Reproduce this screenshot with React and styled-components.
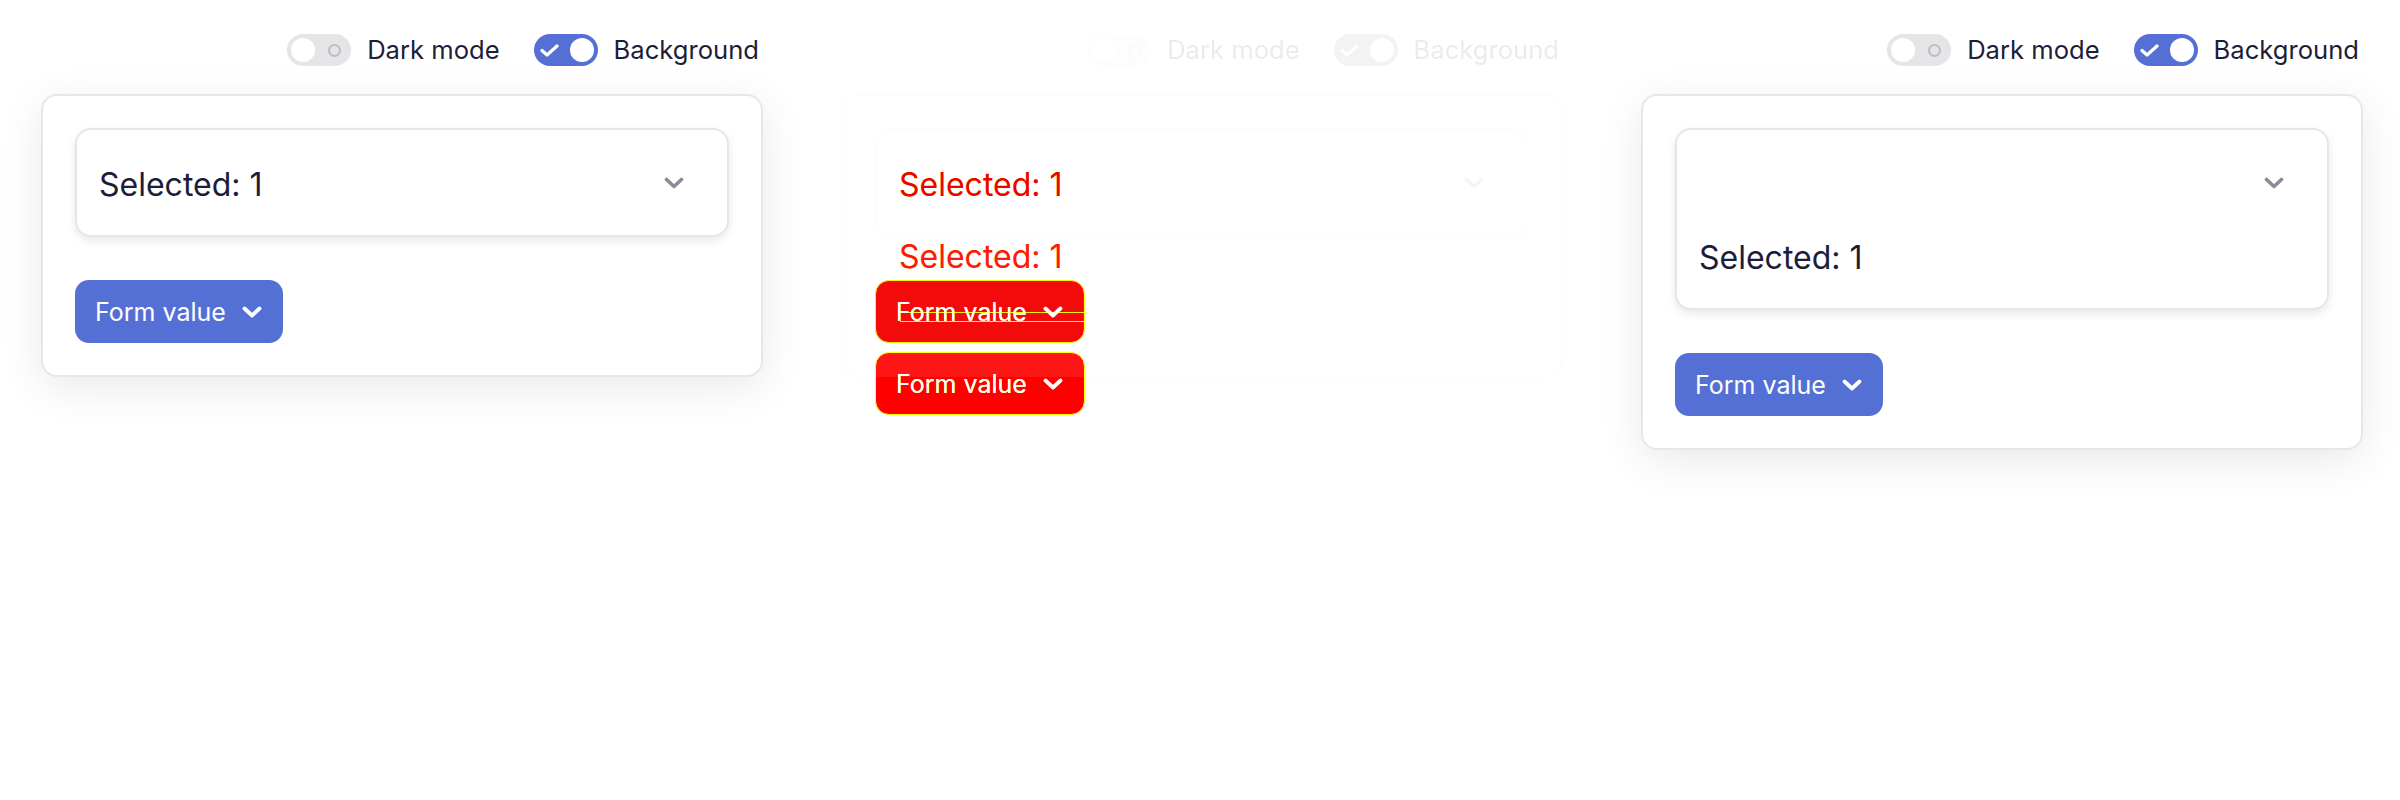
import styled, { createGlobalStyle, css } from "styled-components";

const GlobalStyle = createGlobalStyle`
    body {
        margin: 0;
        background: #ffffff;
        font-family: Inter, "Noto Sans", sans-serif;
        color: #1d1d3b;
    }
`

const Chevron = ({ color, width = 3.6 }) => (
    <svg width="20" height="12" viewBox="0 0 20 12" fill="none">
        <polyline points="2.5,2.5 10,9.5 17.5,2.5" stroke={color} strokeWidth={width} strokeLinecap="round" strokeLinejoin="round" />
    </svg>
);

const Check = () => (
    <svg width="19" height="13" viewBox="0 0 19 13" fill="none">
        <polyline points="2,6.5 7,11 17,2" stroke="#fff" strokeWidth="3.2" strokeLinecap="round" strokeLinejoin="round" />
    </svg>
);

const Toolbar = ({ hidden }) => (
    <Bar $hidden={hidden}>
        <ToggleGroup>
            <Switch>
                <Knob />
                <Ring />
            </Switch>
            <Label>Dark mode</Label>
        </ToggleGroup>
        <ToggleGroup>
            <Switch $on>
                <Check />
                <Knob />
            </Switch>
            <Label>Background</Label>
        </ToggleGroup>
    </Bar>
);

const Panel = ({ wrapped }) => (
    <Column>
        <Toolbar />
        <Card>
            <CardBody>
                <SelectBox $wrapped={wrapped}>
                    {wrapped ? (
                        <>
                            <SelectLine $end>
                                <ChevronBox><Chevron color="#8a8a9b" /></ChevronBox>
                            </SelectLine>
                            <SelectLine>
                                <SelectValue>Selected: 1</SelectValue>
                            </SelectLine>
                        </>
                    ) : (
                        <SelectLine>
                            <SelectValue>Selected: 1</SelectValue>
                            <ChevronBox><Chevron color="#8a8a9b" /></ChevronBox>
                        </SelectLine>
                    )}
                </SelectBox>
                <FormButton>
                    Form value
                    <Chevron color="#fff" width={3.8} />
                </FormButton>
            </CardBody>
        </Card>
    </Column>
);

const DiffPanel = () => (
    <Stack>
        <Faded>
            <Panel />
        </Faded>
        <Column>
            <Toolbar hidden />
            <Card $ghost>
                <DiffBody>
                    <SelectBox $ghost>
                        <SelectLine>
                            <SelectValue $red>Selected: 1</SelectValue>
                        </SelectLine>
                    </SelectBox>
                    <DiffText>Selected: 1</DiffText>
                    <FormButton $red $stripes>
                        Form value
                        <Chevron color="#fff" width={3.8} />
                    </FormButton>
                    <FormButton $red $second>
                        Form value
                        <Chevron color="#fff" width={3.8} />
                    </FormButton>
                </DiffBody>
            </Card>
        </Column>
    </Stack>
);

const App = () => {
    return (
        <>
            <GlobalStyle />
            <Page>
                <Panel />
                <DiffPanel />
                <Panel wrapped />
            </Page>
        </>
    );
}

const Page = styled.div`
    display: flex;
    width: 2400px;
    height: 800px;
    background: #ffffff;
`
const Column = styled.div`
    width: 800px;
    box-sizing: border-box;
    padding: 34px 37px 0 41px;
    display: flex;
    flex-direction: column;
`
const Stack = styled.div`
    display: grid;
    width: 800px;
    & > * {
        grid-area: 1 / 1;
    }
`
const Faded = styled.div`
    opacity: 0.09;
    filter: grayscale(1);
`
const Bar = styled.div`
    display: flex;
    justify-content: flex-end;
    align-items: center;
    gap: 34px;
    height: 32px;
    padding-right: 4px;
    visibility: ${p => p.$hidden ? "hidden" : "visible"};
`
const ToggleGroup = styled.div`
    display: flex;
    align-items: center;
    gap: 16px;
`
const Switch = styled.span`
    width: 64px;
    height: 32px;
    box-sizing: border-box;
    border-radius: 16px;
    display: flex;
    align-items: center;
    justify-content: space-between;
    background: ${p => p.$on ? "#5470d4" : "#e5e5e7"};
    padding: ${p => p.$on ? "0 4px 0 6px" : "0 10px 0 4px"};
`
const Knob = styled.span`
    width: 24px;
    height: 24px;
    border-radius: 50%;
    background: #ffffff;
`
const Ring = styled.span`
    width: 13px;
    height: 13px;
    box-sizing: border-box;
    border-radius: 50%;
    border: 2px solid #bdbdc2;
`
const Label = styled.span`
    font-size: 25.6px;
    line-height: 32px;
    color: #1d1d3b;
`
const Card = styled.div`
    margin-top: 28px;
    border: 2px solid ${p => p.$ghost ? "transparent" : "#e7e7e9"};
    border-radius: 16px;
    background: ${p => p.$ghost ? "transparent" : "#ffffff"};
    box-shadow: ${p => p.$ghost ? "none" : "0 10px 44px rgba(0, 0, 0, 0.09)"};
    padding: 32px;
`
const CardBody = styled.div`
    display: flex;
    flex-direction: column;
    align-items: flex-start;
    gap: 43px;
`
const DiffBody = styled.div`
    display: flex;
    flex-direction: column;
    align-items: flex-start;
`
const SelectBox = styled.div`
    align-self: stretch;
    border: 2px solid ${p => p.$ghost ? "transparent" : "#e6e6e8"};
    border-radius: 16px;
    background: ${p => p.$ghost ? "transparent" : "#ffffff"};
    box-shadow: ${p => p.$ghost ? "none" : "0 4px 10px rgba(0, 0, 0, 0.09)"};
    padding: 16px 22px;
    display: flex;
    flex-direction: column;
`
const SelectLine = styled.div`
    height: 73px;
    display: flex;
    align-items: center;
    justify-content: ${p => p.$end ? "flex-end" : "space-between"};
`
const SelectValue = styled.span`
    font-size: 32px;
    padding-top: 3px;
    color: ${p => p.$red ? "#ff0000" : "#1d1d3b"};
    ${p => p.$red && css`
        text-shadow: 0 0 0.6px #ffff00;
    `}
`
const DiffText = styled.div`
    font-size: 32px;
    line-height: 40px;
    margin: 0 0 3px 24px;
    color: #ff0000;
    text-shadow: 0 0 0.6px #ffff00;
`
const ChevronBox = styled.span`
    display: flex;
    margin-right: 21px;
`
const FormButton = styled.button`
    height: 63px;
    box-sizing: border-box;
    border: ${p => p.$red ? "1px solid #ffff00" : "none"};
    border-radius: 14px;
    padding: 0 21px 0 20px;
    display: flex;
    align-items: center;
    gap: 16px;
    font-family: Inter, "Noto Sans", sans-serif;
    font-size: 25px;
    color: #ffffff;
    background: #5470d4;
    margin-top: ${p => p.$second ? "9px" : "0"};
    ${p => p.$red && css`
        background: #ff0000;
        text-shadow: 0 0 0.6px #ffff00;
    `}
    ${p => p.$stripes && css`
        background:
            linear-gradient(#ffff00, #ffff00) 24px 31px / calc(100% - 24px) 1px no-repeat,
            linear-gradient(#ffff00, #ffff00) 24px 40px / calc(100% - 24px) 1px no-repeat,
            #ff0000;
    `}
`

export default App;
